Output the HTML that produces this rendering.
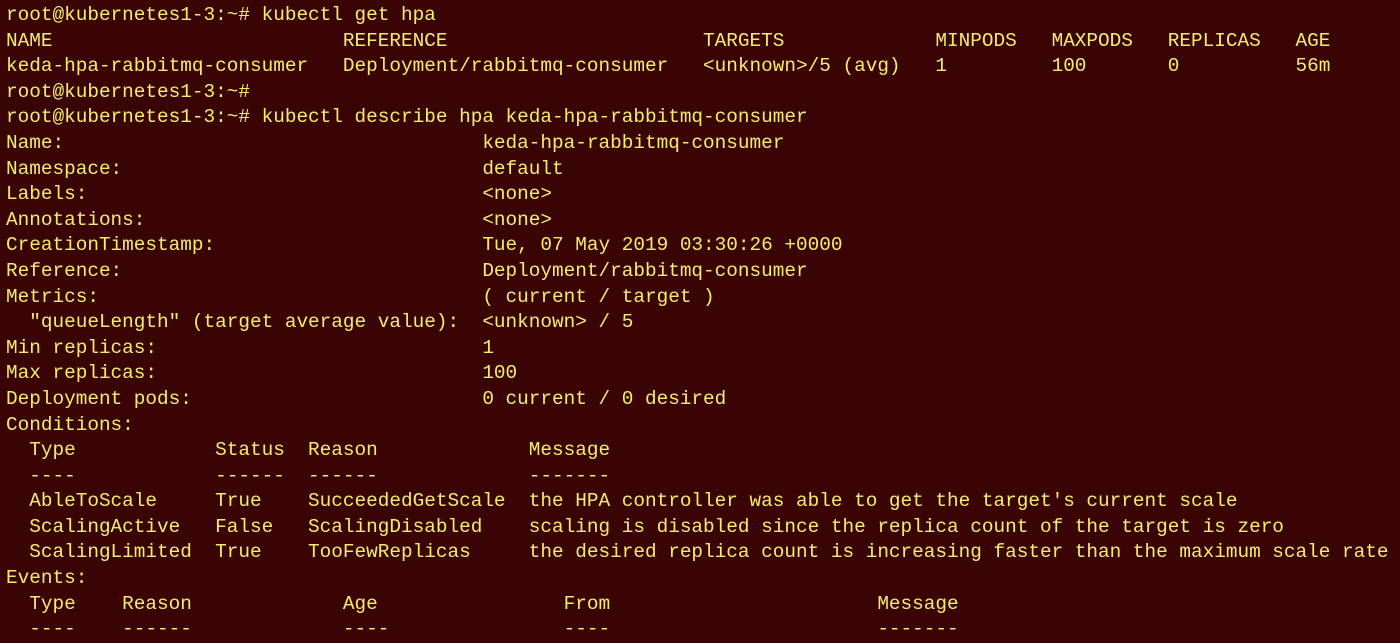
<!DOCTYPE html>
<html><head><style>
html,body{margin:0;padding:0;background:#3b0404;width:1400px;height:639px;overflow:hidden}
pre{margin:0;position:absolute;left:6px;top:3px;font-family:"Liberation Mono",monospace;font-size:19.37px;line-height:25.6px;color:#f2ee6c;white-space:pre}
</style></head><body><pre>root@kubernetes1-3:~# kubectl get hpa
NAME                         REFERENCE                      TARGETS             MINPODS   MAXPODS   REPLICAS   AGE
keda-hpa-rabbitmq-consumer   Deployment/rabbitmq-consumer   &lt;unknown&gt;/5 (avg)   1         100       0          56m
root@kubernetes1-3:~#
root@kubernetes1-3:~# kubectl describe hpa keda-hpa-rabbitmq-consumer
Name:                                    keda-hpa-rabbitmq-consumer
Namespace:                               default
Labels:                                  &lt;none&gt;
Annotations:                             &lt;none&gt;
CreationTimestamp:                       Tue, 07 May 2019 03:30:26 +0000
Reference:                               Deployment/rabbitmq-consumer
Metrics:                                 ( current / target )
  "queueLength" (target average value):  &lt;unknown&gt; / 5
Min replicas:                            1
Max replicas:                            100
Deployment pods:                         0 current / 0 desired
Conditions:
  Type            Status  Reason             Message
  ----            ------  ------             -------
  AbleToScale     True    SucceededGetScale  the HPA controller was able to get the target's current scale
  ScalingActive   False   ScalingDisabled    scaling is disabled since the replica count of the target is zero
  ScalingLimited  True    TooFewReplicas     the desired replica count is increasing faster than the maximum scale rate
Events:
  Type    Reason             Age                From                       Message
  ----    ------             ----               ----                       -------</pre></body></html>
